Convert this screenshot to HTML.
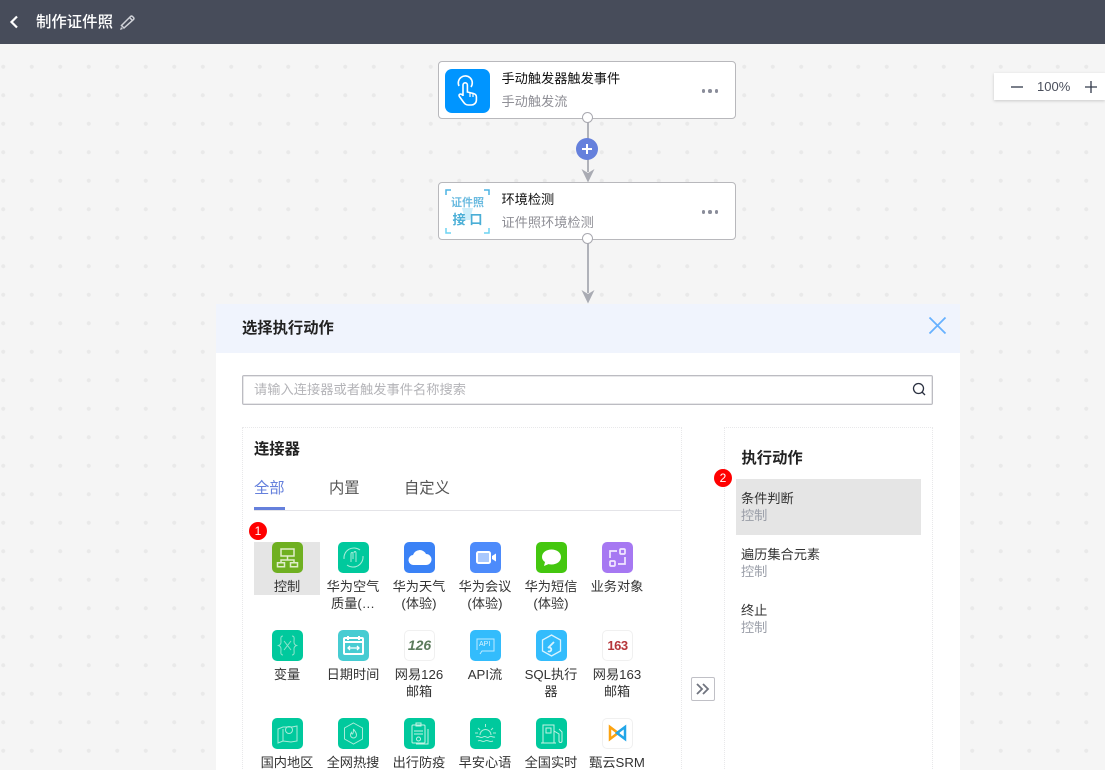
<!DOCTYPE html>
<html lang="zh"><head><meta charset="utf-8"><title>制作证件照</title>
<style>
*{box-sizing:border-box;margin:0;padding:0}
html,body{width:1105px;height:770px;overflow:hidden}
body{position:relative;font-family:"Liberation Sans","Noto Sans CJK SC",sans-serif;font-size:13.2px;color:#333;
background-color:#f5f5f5;background-image:radial-gradient(circle at 50% 50%,#e9e9e9 0,#e9e9e9 1.700px,transparent 2.300px);background-size:28.5px 28.5px;background-position:-11px -4.500px}
.a{position:absolute;white-space:nowrap}
.top{left:0;top:0;width:1105px;height:44px;background:#474c5a}
.node{left:438px;width:298px;height:58px;background:#fff;border:1px solid #b8b8bc;border-radius:4px}
.t{left:501.500px;font-size:13.200px;line-height:18px;color:#111}
.s{left:501.500px;font-size:13.200px;line-height:18px;color:#8f8f96}
.dots{left:701.500px;width:17px;height:4px}
.dots i{position:absolute;top:0;width:3.600px;height:3.600px;border-radius:50%;background:#8a8d9a}
.circ{left:582px;width:11px;height:11px;border-radius:50%;background:#fff;border:1px solid #a9a9b0}
.line{left:587px;width:1.500px;background:#b0b2b9}
.ic{position:absolute;width:31px;height:31px;border-radius:5px;overflow:hidden}
.lb{position:absolute;width:66px;text-align:center;font-size:13.200px;line-height:17px;color:#333;white-space:normal}
.ic svg{display:block;width:31px;height:31px;fill:none;stroke:#fff}
.ic.w{background:#fff;border:1px solid #f0f0f0}
.ic.w svg{width:29px;height:29px}
.badge{position:absolute;width:18px;height:18px;border-radius:50%;background:#f00;color:#fff;font-size:12px;line-height:18px;text-align:center}
.g{background:#00c99d}
.b{background:#33bcfc}
</style></head><body>
<div class="a top"></div>
<svg class="a" style="left:8px;top:15px" width="12" height="14" viewBox="0 0 12 14"><path d="M9 1.500 3.500 7 9 12.500" fill="none" stroke="#fff" stroke-width="2.200"/></svg>
<div class="a" style="left:36px;top:13px;font-size:15.400px;line-height:20px;color:#fff;font-weight:500">制作证件照</div>
<svg class="a" style="left:119px;top:14px" width="17" height="17" viewBox="0 0 17 17"><path d="M5 14 2.500 11.500 11.500 2.500a1.500 1.500 0 0 1 2 0l1 1a1.500 1.500 0 0 1 0 2zM10.500 3.500l3 3" fill="none" stroke="#d0d2d8" stroke-width="1.500"/><path d="M1 16l1-3 2 2z" fill="#d0d2d8"/></svg>

<div class="a node" style="top:61px"></div>
<div class="a" style="left:445px;top:69px;width:45px;height:44px;background:#0095ff;border-radius:7px"></div>
<svg class="a" style="left:445px;top:69px" width="45" height="44" viewBox="0 0 45 44" fill="none" stroke="#fff" stroke-width="1.600"><path d="M14 17a7 7 0 1 1 12 1"/><path d="M18 27V16a2.200 2.200 0 0 1 4.400 0v7l6 1.500c2 .5 3 1.800 3 3.500v3c0 3-2.500 5-5 5h-3c-2.500 0-3.500-1-5-3l-4-5.500c-1.300-2 1-3.800 3.600-1z"/><path d="M25 24v4M28 25v3" stroke-width="1.200"/></svg>
<div class="a t" style="top:70px">手动触发器触发事件</div>
<div class="a s" style="top:93px">手动触发流</div>
<div class="a dots" style="top:89px"><i style="left:0"></i><i style="left:6.500px"></i><i style="left:13px"></i></div>

<div class="a line" style="top:122px;height:50px"></div>
<div class="a circ" style="top:112px"></div>
<div class="a" style="left:576px;top:138px;width:22px;height:22px;border-radius:50%;background:#6580dc"></div>
<svg class="a" style="left:576px;top:138px" width="22" height="22"><path d="M6 11h10M11 6v10" stroke="#fff" stroke-width="2"/></svg>
<svg class="a" style="left:581px;top:169px" width="14" height="14"><path d="M0.500 0 7 4 13.500 0 7 13.500z" fill="#a9abb3"/></svg>

<div class="a node" style="top:182px"></div>
<svg class="a" style="left:445px;top:189px" width="45" height="45" fill="none" stroke-width="1.500"><path d="M1 6V1h5" stroke="#4db3e3"/><path d="M39 1h5v5" stroke="#4db3e3"/><path d="M1 39v5h5" stroke="#6dd3f2"/><path d="M39 44h5v-5" stroke="#6dd3f2"/><path d="M17 19h11l-3 12h-5z" fill="#cdeefa" stroke="none"/></svg>
<div class="a" style="left:445px;top:196px;width:45px;text-align:center;font-size:11px;line-height:14px;color:#6bbbe0;font-weight:700">证件照</div>
<div class="a" style="left:445px;top:211px;width:45px;text-align:center;font-size:13.200px;line-height:18px;color:#4aaed6;font-weight:700">接 口</div>
<div class="a t" style="top:191px">环境检测</div>
<div class="a s" style="top:214px">证件照环境检测</div>
<div class="a dots" style="top:210px"><i style="left:0"></i><i style="left:6.500px"></i><i style="left:13px"></i></div>

<div class="a line" style="top:243px;height:50px"></div>
<div class="a circ" style="top:233px"></div>
<svg class="a" style="left:581px;top:290px" width="14" height="14"><path d="M0.500 0 7 4 13.500 0 7 13.500z" fill="#a9abb3"/></svg>

<div class="a" style="left:994px;top:73px;width:111px;height:27px;background:#fff;box-shadow:0 1px 3px rgba(0,0,0,.18)"></div>
<svg class="a" style="left:1010px;top:80px" width="14" height="14"><path d="M1 7h12" stroke="#333a4a" stroke-width="1.300"/></svg>
<div class="a" style="left:1037px;top:79px;font-size:13px;line-height:16px;color:#4a4f5c">100%</div>
<svg class="a" style="left:1084px;top:80px" width="14" height="14"><path d="M1 7h12M7 1v12" stroke="#333a4a" stroke-width="1.300"/></svg>

<div class="a" style="left:216px;top:304px;width:744px;height:466px;background:#fff"></div>
<div class="a" style="left:216px;top:304px;width:744px;height:49px;background:#f0f4fd"></div>
<div class="a" style="left:242px;top:319px;font-size:15.300px;line-height:20px;font-weight:700;color:#222">选择执行动作</div>
<svg class="a" style="left:928px;top:316px" width="19" height="19"><path d="M1.500 1.500l16 16M17.500 1.500l-16 16" stroke="#66b1ff" stroke-width="1.800"/></svg>

<div class="a" style="left:242px;top:375px;width:691px;height:30px;background:#fff;border:1px solid #bcbcc2;border-radius:2px;box-shadow:inset 0 0 0 .5px #d0d0d6"></div>
<div class="a" style="left:254px;top:381px;font-size:13.250px;line-height:18px;color:#b4b4b8">请输入连接器或者触发事件名称搜索</div>
<svg class="a" style="left:911px;top:381px" width="16" height="16" fill="none" stroke="#2a3040" stroke-width="1.300"><circle cx="7.500" cy="7.500" r="5"/><path d="M11 11l3 3"/></svg>

<div class="a" style="left:242px;top:427px;width:440px;height:350px;border:1px dotted #e8e8ea"></div>
<div class="a" style="left:254px;top:440px;font-size:15.300px;line-height:20px;font-weight:700;color:#222">连接器</div>
<div class="a" style="left:254px;top:479px;font-size:15.300px;line-height:20px;color:#6580dc">全部</div>
<div class="a" style="left:329px;top:479px;font-size:15.300px;line-height:20px;color:#555">内置</div>
<div class="a" style="left:404px;top:479px;font-size:15.300px;line-height:20px;color:#555">自定义</div>
<div class="a" style="left:254px;top:510px;width:428px;height:1px;background:#e4e4e8"></div>
<div class="a" style="left:254px;top:507px;width:31px;height:3px;background:#6580dc"></div>

<div class="a" style="left:254px;top:542px;width:66px;height:53px;background:#e5e5e5"></div>
<div class="badge" style="left:249px;top:522px">1</div>

<div class="ic" style="left:272px;top:542px;background:#6fb021"><svg viewBox="0 0 31 31"><path d="M9 7h13v7H9zM15.500 14v4M9 20.500V18h13v2.500M5.500 20.700h7v4h-7zM18.500 20.700h7v4h-7z" stroke="#e0eecb" stroke-width="1.500"/></svg></div>
<div class="lb" style="left:254px;top:578px">控制</div>
<div class="ic g" style="left:338px;top:542px"><svg viewBox="0 0 31 31"><path d="M6 17a10 10 0 0 1 16-9M25 14a10 10 0 0 1-16 9" stroke="#a8ecd9"/><path d="M13 20v-8c0-2 2-2 2 0v5M18 20v-9c0-2-2-2-2 0" stroke="#a8ecd9"/></svg></div>
<div class="lb" style="left:320px;top:578px">华为空气<br>质量(…</div>
<div class="ic" style="left:404px;top:542px;background:#3b82f6"><svg viewBox="0 0 31 31"><path d="M10 23a5 5 0 0 1-1-10 7 7 0 0 1 13-1 5.500 5.500 0 0 1 0 11z" fill="#fff" stroke="none"/></svg></div>
<div class="lb" style="left:386px;top:578px">华为天气<br>(体验)</div>
<div class="ic" style="left:470px;top:542px;background:#4d8bfb"><svg viewBox="0 0 31 31"><rect x="7" y="10" width="13" height="11" rx="1.500" fill="#a9c8fd" stroke="#fff" stroke-width="2"/><path d="M22 14l4-2.500v8L22 17z" fill="#fff" stroke="none"/></svg></div>
<div class="lb" style="left:452px;top:578px">华为会议<br>(体验)</div>
<div class="ic" style="left:536px;top:542px;background:#44c70f"><svg viewBox="0 0 31 31"><path d="M15.500 7.500c5.500 0 9.500 3.300 9.500 7.500s-4 7.500-9.500 7.500c-1 0-2-.1-3-.4L8 24l1-4c-2-1.300-3-3-3-5 0-4.200 4-7.500 9.500-7.500z" fill="#fff" stroke="none"/></svg></div>
<div class="lb" style="left:518px;top:578px">华为短信<br>(体验)</div>
<div class="ic" style="left:602px;top:542px;background:#a678f2"><svg viewBox="0 0 31 31"><rect x="18" y="7" width="5" height="5" rx="1" stroke="#f1e8ff" stroke-width="1.700"/><rect x="8" y="19" width="5" height="5" rx="1" stroke="#f1e8ff" stroke-width="1.700"/><path d="M15 9H8v7M16 22h7v-7" stroke="#f1e8ff" stroke-width="1.700"/></svg></div>
<div class="lb" style="left:584px;top:578px">业务对象</div>

<div class="ic g" style="left:272px;top:630px"><svg viewBox="0 0 31 31"><path d="M11 6c-3 0-2 3-2 6 0 2-1 3-2.500 3.500C8 16 9 17 9 19c0 3-1 6 2 6M20 6c3 0 2 3 2 6 0 2 1 3 2.500 3.500C23 16 22 17 22 19c0 3 1 6-2 6M12 11l7 9M19 11l-7 9" stroke="#8fe4cd"/></svg></div>
<div class="lb" style="left:254px;top:666px">变量</div>
<div class="ic" style="left:338px;top:630px;background:#47ccd2"><svg viewBox="0 0 31 31"><rect x="6" y="8" width="19" height="16" rx="1" stroke-width="2"/><path d="M10 6v4M21 6v4M6 12h19" stroke-width="2"/><path d="M10 18h11M12 16l-2 2 2 2M19 16l2 2-2 2" stroke-width="1.300"/></svg></div>
<div class="lb" style="left:320px;top:666px">日期时间</div>
<div class="ic w" style="left:404px;top:630px;text-align:center;font:italic 700 14px/29px 'Liberation Sans',sans-serif;color:#5c7a5c">126</div>
<div class="lb" style="left:386px;top:666px">网易126<br>邮箱</div>
<div class="ic b" style="left:470px;top:630px"><svg viewBox="0 0 31 31"><path d="M7 20V9h17v12H12l-2 3" stroke="#bdeaff"/></svg><div class="a" style="left:9px;top:10px;font-size:7px;line-height:10px;color:#d8f3ff">API</div></div>
<div class="lb" style="left:452px;top:666px">API流</div>
<div class="ic b" style="left:536px;top:630px"><svg viewBox="0 0 31 31"><path d="M15.500 5l9 5v11l-9 5-9-5V10z" stroke="#d8f3ff" stroke-width="1.300"/><path d="M12 18l6-6M12 21a2 2 0 1 0 0-3" stroke="#d8f3ff" stroke-width="1.800"/></svg></div>
<div class="lb" style="left:518px;top:666px">SQL执行<br>器</div>
<div class="ic w" style="left:602px;top:630px;text-align:center;font:700 13px/29px 'Liberation Sans',sans-serif;color:#b5363a;letter-spacing:-.5px">163</div>
<div class="lb" style="left:584px;top:666px">网易163<br>邮箱</div>

<div class="ic g" style="left:272px;top:718px"><svg viewBox="0 0 31 31"><path d="M6 11l5-2 9 0 5-1v15l-6 1-8-1-5 2z" stroke="#a8ecd9"/><circle cx="17" cy="12" r="3.500" stroke="#a8ecd9"/><path d="M11 11v12" stroke="#a8ecd9"/></svg></div>
<div class="lb" style="left:254px;top:754px">国内地区</div>
<div class="ic g" style="left:338px;top:718px"><svg viewBox="0 0 31 31"><path d="M15.500 5l9 5v11l-9 5-9-5V10z" stroke="#a8ecd9"/><path d="M15.500 11c1 2 3 3 3 6a3 3 0 0 1-6 0c0-1 .5-2 1-2.500 0 1 .5 1.500 1 1.500 1-1 1-3 1-5z" stroke="#a8ecd9"/></svg></div>
<div class="lb" style="left:320px;top:754px">全网热搜</div>
<div class="ic g" style="left:404px;top:718px"><svg viewBox="0 0 31 31"><rect x="8" y="7" width="13" height="18" rx="1" stroke="#c4f2e5"/><path d="M12 5h5v3h-5zM10 13h9M10 16h9M24 11v15H12" stroke="#c4f2e5"/><circle cx="14.500" cy="21" r="2" stroke="#c4f2e5"/></svg></div>
<div class="lb" style="left:386px;top:754px">出行防疫</div>
<div class="ic g" style="left:470px;top:718px"><svg viewBox="0 0 31 31"><path d="M10 17a5.500 5.500 0 0 1 11 0M15.500 6v3M8 10l2 2M23 10l-2 2M5 15h3M23 15h3M6 19c3-2 4 2 7 0s4 2 6 0 4 1 6 0M8 23c3-2 4 2 7 0s4 2 8 0" stroke="#a8ecd9"/></svg></div>
<div class="lb" style="left:452px;top:754px">早安心语</div>
<div class="ic g" style="left:536px;top:718px"><svg viewBox="0 0 31 31"><path d="M7 25V7h11v18M5 25h15M10 10h5v5h-5zM18 13l5 3v7a1.500 1.500 0 0 0 3 0V14l-3-3" stroke="#c4f2e5"/></svg></div>
<div class="lb" style="left:518px;top:754px">全国实时</div>
<div class="ic w" style="left:602px;top:718px"><svg viewBox="0 0 29 29"><path d="M7 8v12l8-6z" stroke="#fca311" stroke-width="2.500"/><path d="M22 8v12l-8-6z" stroke="#22a6e8" stroke-width="2.500"/></svg></div>
<div class="lb" style="left:584px;top:754px">甄云SRM</div>

<div class="a" style="left:691px;top:677px;width:24px;height:24px;background:#fff;border:1px solid #c0c0c6;border-radius:2px"></div>
<svg class="a" style="left:696px;top:683px" width="14" height="12" fill="none" stroke="#70747f" stroke-width="1.800"><path d="M1 1l5 5-5 5M7 1l5 5-5 5"/></svg>

<div class="a" style="left:724px;top:427px;width:209px;height:350px;border:1px dotted #e8e8ea"></div>
<div class="a" style="left:741.500px;top:449px;font-size:15.300px;line-height:20px;font-weight:700;color:#222">执行动作</div>
<div class="a" style="left:736px;top:479px;width:185px;height:56px;background:#e5e5e5"></div>
<div class="badge" style="left:714px;top:469px">2</div>
<div class="a" style="left:741px;top:490px;line-height:18px;color:#333">条件判断</div>
<div class="a" style="left:741px;top:507px;line-height:18px;color:#9a9ea8">控制</div>
<div class="a" style="left:741px;top:546px;line-height:18px;color:#333">遍历集合元素</div>
<div class="a" style="left:741px;top:563px;line-height:18px;color:#9a9ea8">控制</div>
<div class="a" style="left:741px;top:602px;line-height:18px;color:#333">终止</div>
<div class="a" style="left:741px;top:619px;line-height:18px;color:#9a9ea8">控制</div>
</body></html>
